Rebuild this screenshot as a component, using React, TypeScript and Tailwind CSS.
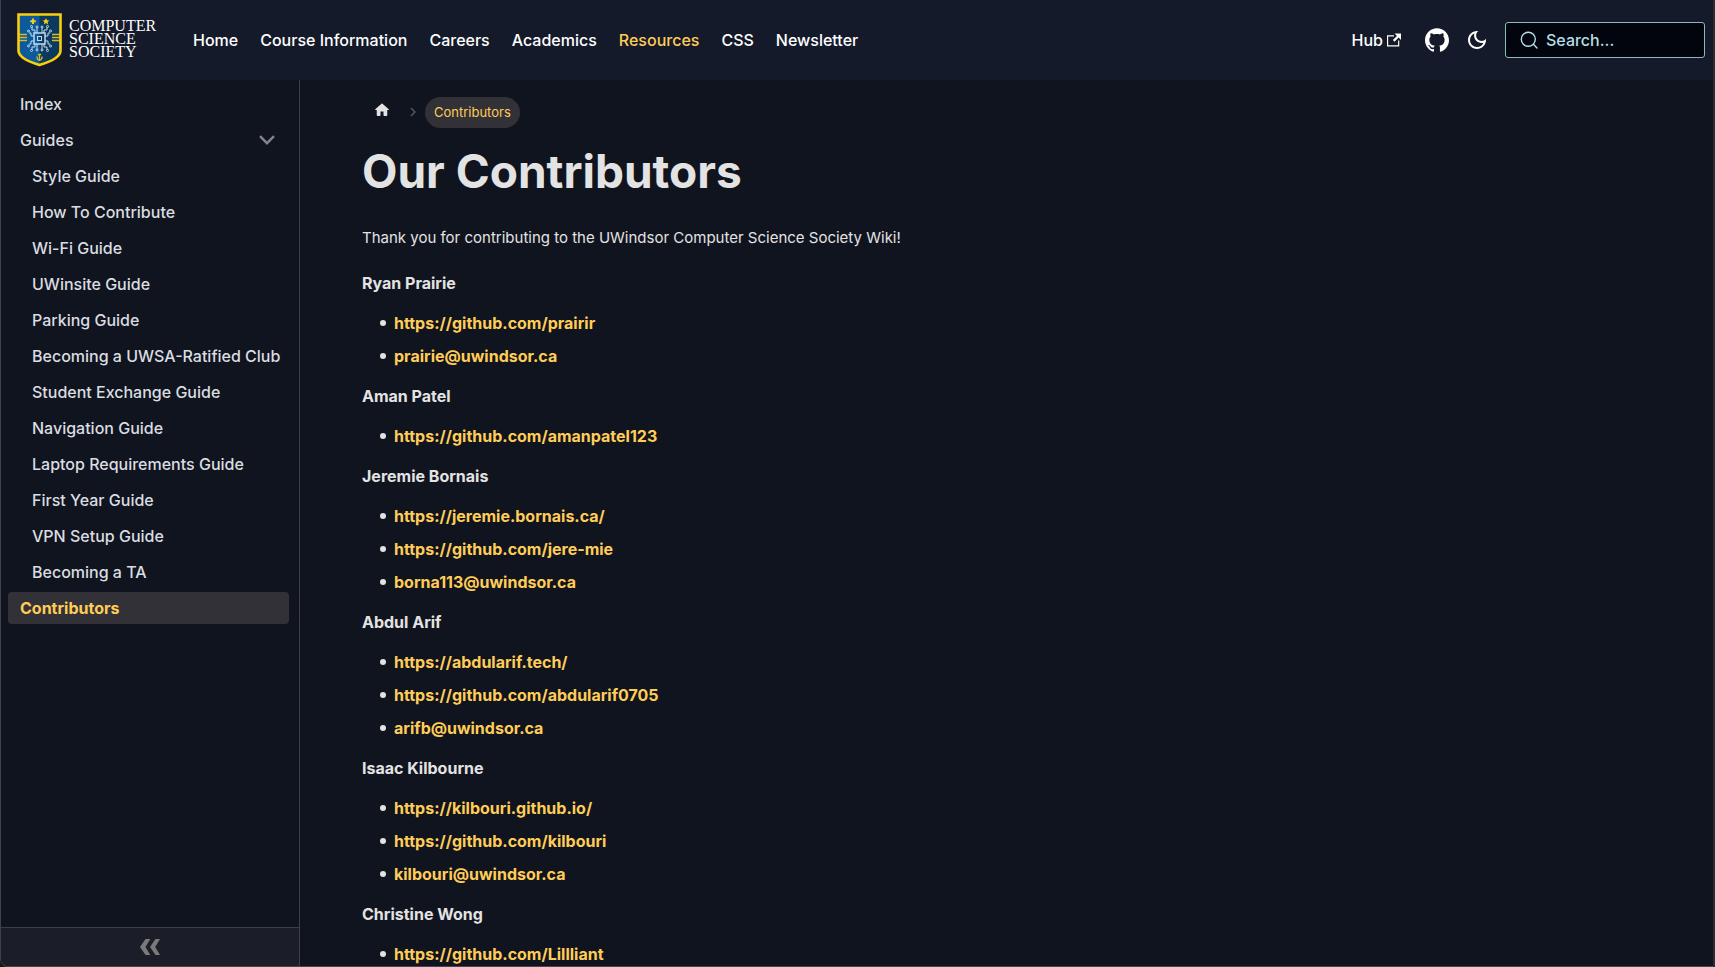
import { ReactNode } from "react";

type NavItem = { label: string; active?: boolean };

const navItems: NavItem[] = [
  { label: "Home" },
  { label: "Course Information" },
  { label: "Careers" },
  { label: "Academics" },
  { label: "Resources", active: true },
  { label: "CSS" },
  { label: "Newsletter" },
];

const guides = [
  "Style Guide",
  "How To Contribute",
  "Wi-Fi Guide",
  "UWinsite Guide",
  "Parking Guide",
  "Becoming a UWSA-Ratified Club",
  "Student Exchange Guide",
  "Navigation Guide",
  "Laptop Requirements Guide",
  "First Year Guide",
  "VPN Setup Guide",
  "Becoming a TA",
];

const contributors = [
  { name: "Ryan Prairie", links: ["https://github.com/prairir", "prairie@uwindsor.ca"] },
  { name: "Aman Patel", links: ["https://github.com/amanpatel123"] },
  {
    name: "Jeremie Bornais",
    links: ["https://jeremie.bornais.ca/", "https://github.com/jere-mie", "borna113@uwindsor.ca"],
  },
  {
    name: "Abdul Arif",
    links: ["https://abdularif.tech/", "https://github.com/abdularif0705", "arifb@uwindsor.ca"],
  },
  {
    name: "Isaac Kilbourne",
    links: ["https://kilbouri.github.io/", "https://github.com/kilbouri", "kilbouri@uwindsor.ca"],
  },
  { name: "Christine Wong", links: ["https://github.com/Lillliant"] },
];

function Shield() {
  return (
    <svg width="46" height="54" viewBox="0 0 46 54" aria-hidden="true">
      <path d="M1.5 1.5h42v36c0 6-9 11-21 14.500C10.500 48.500 1.500 43.500 1.500 37.500z" fill="#0a5a9c" />
      <path d="M22.500 1.500h21v36c0 6-9 11-21 14.500z" fill="#0b3a5e" />
      <path d="M2 21.500h8M2 24.500h8M2 27.500h8M35 21.500h8M35 24.500h8M35 27.500h8" stroke="#d8b92a" strokeWidth="1.300" />
      <path d="M1.500 1.500h42v36c0 6-9 11-21 14.500C10.500 48.500 1.500 43.500 1.500 37.500z" fill="none" stroke="#fccf0a" strokeWidth="2.600" />
      <path d="M16 5.500v5.500M13.200 8.200h5.600" stroke="#f5cb1c" strokeWidth="2" />
      <path d="M29 5l1 2.200 2.400.2-1.800 1.600.6 2.400-2.200-1.300-2.200 1.300.6-2.400-1.800-1.600 2.400-.2z" fill="#f5cb1c" />
      <path d="M22.500 41v6M20 43.500c0 5 5 5 5 0M20.800 41.500h3.400" fill="none" stroke="#d8b92a" strokeWidth="1.300" />
      <g fill="none" stroke="#c3d8ea" strokeWidth="1">
        <rect x="17" y="20" width="11" height="11" strokeWidth="1.500" />
        <rect x="20.500" y="23.500" width="4" height="4" />
        <path d="M20 20v-5M25 20v-5M20 31v5M25 31v5M17 23h-3M17 28h-3M28 23h3M28 28h3" />
        <path d="M18 20v-3h-3v-3M27 20v-3h3v-3M18 31v3h-3v3M27 31v3h3v3M14 23v-3h-2M14 28v3h-2M31 23v-3h2M31 28v3h2" />
        <circle cx="20" cy="14" r="1" />
        <circle cx="25" cy="14" r="1" />
        <circle cx="20" cy="37" r="1" />
        <circle cx="25" cy="37" r="1" />
        <circle cx="14.500" cy="13.500" r="1" />
        <circle cx="30.500" cy="13.500" r="1" />
        <circle cx="14.500" cy="37.500" r="1" />
        <circle cx="30.500" cy="37.500" r="1" />
        <circle cx="11.500" cy="18" r="1" />
        <circle cx="33.500" cy="18" r="1" />
        <circle cx="11.500" cy="33" r="1" />
        <circle cx="33.500" cy="33" r="1" />
      </g>
    </svg>
  );
}

function ExternalIcon() {
  return (
    <svg width="14" height="14" viewBox="0 0 24 24" fill="currentColor" aria-hidden="true">
      <path d="M21 13v10h-21v-19h12v2h-10v15h17v-8h2zm3-12h-10.988l4.035 4-6.977 7.070 2.828 2.828 6.977-7.070 4.125 4.172v-11z" />
    </svg>
  );
}

function GithubIcon() {
  return (
    <svg width="24" height="24" viewBox="0 0 24 24" fill="currentColor" aria-hidden="true">
      <path d="M12 .297c-6.630 0-12 5.373-12 12 0 5.303 3.438 9.800 8.205 11.385.6.113.82-.258.82-.577 0-.285-.01-1.040-.015-2.040-3.338.724-4.042-1.610-4.042-1.610C4.422 18.070 3.633 17.700 3.633 17.700c-1.087-.744.084-.729.084-.729 1.205.084 1.838 1.236 1.838 1.236 1.070 1.835 2.809 1.305 3.495.998.108-.776.417-1.305.76-1.605-2.665-.3-5.466-1.332-5.466-5.930 0-1.310.465-2.380 1.235-3.220-.135-.303-.54-1.523.105-3.176 0 0 1.005-.322 3.300 1.230.96-.267 1.980-.399 3-.405 1.020.006 2.040.138 3 .405 2.280-1.552 3.285-1.230 3.285-1.230.645 1.653.24 2.873.12 3.176.765.84 1.230 1.910 1.230 3.220 0 4.610-2.805 5.625-5.475 5.920.42.36.81 1.096.81 2.220 0 1.606-.015 2.896-.015 3.286 0 .315.21.69.825.57C20.565 22.092 24 17.592 24 12.297c0-6.627-5.373-12-12-12" />
    </svg>
  );
}

function MoonIcon() {
  return (
    <svg width="24" height="24" viewBox="0 0 24 24" fill="currentColor" aria-hidden="true">
      <path d="M9.370 5.510c-.18.64-.27 1.310-.27 1.990 0 4.080 3.320 7.400 7.400 7.400.68 0 1.350-.09 1.990-.27C17.450 17.190 14.930 19 12 19c-3.860 0-7-3.140-7-7 0-2.930 1.810-5.450 4.370-6.490zM12 3c-4.970 0-9 4.030-9 9s4.030 9 9 9 9-4.030 9-9c0-.46-.04-.92-.1-1.360-.98 1.370-2.580 2.260-4.400 2.260-2.980 0-5.400-2.420-5.400-5.400 0-1.810.89-3.420 2.260-4.400C12.920 3.040 12.460 3 12 3z" />
    </svg>
  );
}

function SearchIcon() {
  return (
    <svg width="18" height="18" viewBox="0 0 18 18" fill="none" stroke="currentColor" strokeWidth="1.400" strokeLinecap="round" aria-hidden="true">
      <circle cx="8.300" cy="8.300" r="7" />
      <path d="M13.300 13.300l3.700 3.700" />
    </svg>
  );
}

function SideLink({ children, nested, active }: { children: ReactNode; nested?: boolean; active?: boolean }) {
  return (
    <a
      href="#"
      aria-current={active ? "page" : undefined}
      className={
        "block rounded py-1.5 pl-3 leading-5 whitespace-nowrap " +
        (nested ? "ml-3 " : "") +
        (active ? "bg-[#323138] font-bold text-[#ffcd57]" : "font-medium text-[#dadde1]")
      }
    >
      {children}
    </a>
  );
}

export default function App() {
  return (
    <div className="bg-[#1c150d] font-['Inter','Liberation_Sans',sans-serif] text-base text-[#e3e3e3]">
      <div className="flex h-screen flex-col overflow-hidden rounded-bl-lg border-r-2 border-b border-l border-r-[#2b2c2f] border-b-[#4a4650] border-l-[#3d424b] bg-[#10141e]">
        <header className="flex h-20 shrink-0 items-center bg-[#141a2a] pr-2 pl-4 text-white">
          <a href="#" className="mr-9 flex items-center gap-1.5" aria-label="Computer Science Society">
            <Shield />
            <span className="w-[88px] pb-1 font-['Liberation_Serif',serif] text-base leading-[13px]">
              COMPUTER
              <br />
              SCIENCE
              <br />
              SOCIETY
            </span>
          </a>
          <nav className="flex flex-1 items-center gap-[22px] font-medium">
            {navItems.map((item) => (
              <a key={item.label} href="#" className={item.active ? "text-[#ffcd57]" : "text-white"}>
                {item.label}
              </a>
            ))}
          </nav>
          <a href="#" className="mr-6 flex items-center gap-1 font-medium">
            Hub <ExternalIcon />
          </a>
          <a href="#" aria-label="GitHub repository" className="mr-3">
            <GithubIcon />
          </a>
          <button type="button" aria-label="Switch theme" className="mr-3 flex size-8 items-center justify-center">
            <MoonIcon />
          </button>
          <button
            type="button"
            className="flex h-9 w-[200px] items-center gap-2 rounded-[3px] border border-[#8fb8bd] bg-[#02050d] px-[14px] font-medium text-[#b5dfe6]"
          >
            <SearchIcon />
            Search...
          </button>
        </header>

        <div className="flex min-h-0 flex-1">
          <aside className="flex w-[299px] shrink-0 flex-col border-r border-[#3c3f47]">
            <nav className="flex flex-1 flex-col gap-1 pt-2 pr-[10px] pl-[7px]" aria-label="Docs sidebar">
              <SideLink>Index</SideLink>
              <div className="flex items-center">
                <div className="flex-1">
                  <SideLink>Guides</SideLink>
                </div>
                <button type="button" aria-label="Collapse Guides" className="flex h-8 w-11 items-center justify-center">
                  <svg width="20" height="20" viewBox="0 0 20 20" fill="none" stroke="#83858b" strokeWidth="2.400" aria-hidden="true">
                    <path d="M3 6.200l7 7 7-7" />
                  </svg>
                </button>
              </div>
              {guides.map((g) => (
                <SideLink key={g} nested>
                  {g}
                </SideLink>
              ))}
              <SideLink active>Contributors</SideLink>
            </nav>
            <button
              type="button"
              aria-label="Collapse sidebar"
              className="flex h-[39px] shrink-0 items-center justify-center border-t border-[#3c3f47] bg-[#1b1e28]"
            >
              <svg width="20" height="18" viewBox="0 0 20 20" preserveAspectRatio="none" fill="#7a7a7a" aria-hidden="true">
                <path d="M5.500 1h4.800L5.500 10l4.800 9H5.500L0 10zM15.500 1h4.500l-4.800 9 4.800 9h-4.500L10 10z" />
              </svg>
            </button>
          </aside>

          <main className="flex-1 pt-4 pr-16 pl-[62px]">
            <nav aria-label="Breadcrumbs" className="flex h-8 items-center text-[13px]">
              <a href="#" aria-label="Home page" className="flex h-8 w-10 items-center justify-center pb-1">
                <svg width="18" height="18" viewBox="0 0 24 24" fill="#e3e3e3" aria-hidden="true">
                  <path d="M10 19v-5h4v5c0 .55.45 1 1 1h3c.55 0 1-.45 1-1v-7h1.700c.46 0 .68-.57.33-.87L12.670 3.600c-.38-.34-.96-.34-1.340 0l-8.360 7.530c-.34.3-.13.87.33.87H5v7c0 .55.45 1 1 1h3c.55 0 1-.45 1-1z" />
                </svg>
              </a>
              <svg width="23" height="10" viewBox="0 0 23 10" fill="none" stroke="#5a5d65" strokeWidth="1.300" aria-hidden="true">
                <path d="M9 1l4 4-4 4" />
              </svg>
              <span className="rounded-full bg-[#323138] px-[9px] py-[6px] leading-[19px] text-[#ffcd57]">Contributors</span>
            </nav>
            <h1 className="mt-[13px] text-[46px] leading-[60px] font-bold">Our Contributors</h1>
            <p className="mt-6 text-[15px] leading-[26px]">
              Thank you for contributing to the UWindsor Computer Science Society Wiki!
            </p>
            <div className="mt-[19px] flex flex-col gap-[14px]">
              {contributors.map((c) => (
                <section key={c.name}>
                  <p className="leading-[26px] font-bold">{c.name}</p>
                  <ul className="mt-[14px] flex flex-col gap-[7px] pl-[18px] leading-[26px]">
                    {c.links.map((l) => (
                      <li key={l} className="flex items-center before:mr-2 before:size-1.5 before:rounded-full before:bg-[#e3e3e3]">
                        <a href={l.includes("@") ? "mailto:" + l : l} className="font-bold text-[#ffcd57]">
                          {l}
                        </a>
                      </li>
                    ))}
                  </ul>
                </section>
              ))}
            </div>
          </main>
        </div>
      </div>
    </div>
  );
}
